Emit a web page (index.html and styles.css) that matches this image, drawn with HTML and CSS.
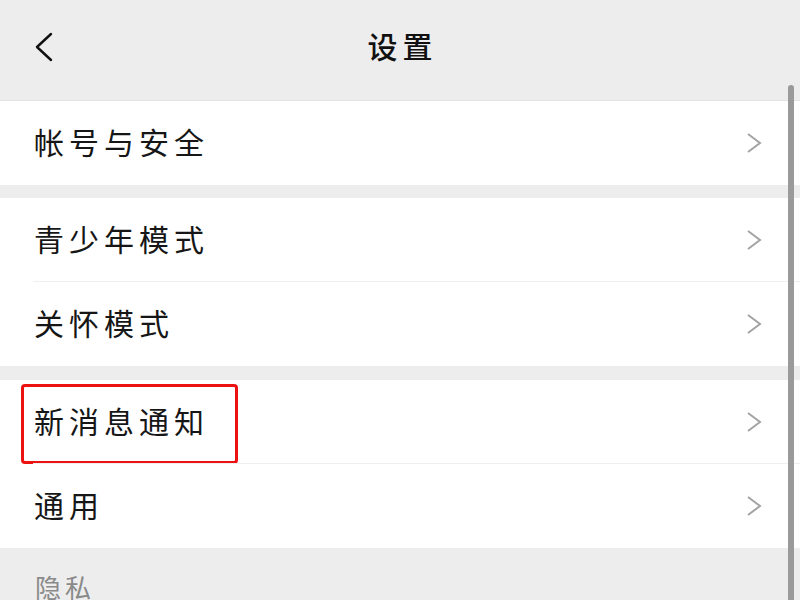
FILE: index.html
```html
<!DOCTYPE html>
<html lang="zh">
<head>
<meta charset="utf-8">
<title>设置</title>
<link rel="stylesheet" href="styles.css">
</head>
<body>
<div class="screen">
  <header class="topbar">
    <svg class="back" width="20" height="30" viewBox="0 0 20 30"><path d="M17 2 L3 15 L17 28" fill="none" stroke="#111" stroke-width="2.4" stroke-linecap="round" stroke-linejoin="round"/></svg>
    <h1 class="title">设置</h1>
  </header>

  <section class="group">
    <div class="row"><span class="label">帐号与安全</span><svg class="chev" width="16" height="22" viewBox="0 0 16 22"><path d="M2 2 L14 11 L2 20" fill="none" stroke="#a3a3a3" stroke-width="2"/></svg></div>
  </section>

  <section class="group gap1">
    <div class="row divided"><span class="label">青少年模式</span><svg class="chev" width="16" height="22" viewBox="0 0 16 22"><path d="M2 2 L14 11 L2 20" fill="none" stroke="#a3a3a3" stroke-width="2"/></svg></div>
    <div class="row"><span class="label">关怀模式</span><svg class="chev" width="16" height="22" viewBox="0 0 16 22"><path d="M2 2 L14 11 L2 20" fill="none" stroke="#a3a3a3" stroke-width="2"/></svg></div>
  </section>

  <section class="group gap2">
    <div class="row divided"><span class="label">新消息通知</span><span class="highlight"></span><svg class="chev" width="16" height="22" viewBox="0 0 16 22"><path d="M2 2 L14 11 L2 20" fill="none" stroke="#a3a3a3" stroke-width="2"/></svg></div>
    <div class="row"><span class="label">通用</span><svg class="chev" width="16" height="22" viewBox="0 0 16 22"><path d="M2 2 L14 11 L2 20" fill="none" stroke="#a3a3a3" stroke-width="2"/></svg></div>
  </section>

  <div class="section-title">隐私</div>

  <div class="scrollbar"></div>
</div>
</body>
</html>
```
FILE: styles.css
```css
* { box-sizing: border-box; }
html, body { margin: 0; padding: 0; }
body {
  background: #ededed;
  font-family: "Noto Sans CJK SC", "Noto Sans", sans-serif;
  color: #161616;
  width: 800px;
  height: 600px;
  overflow: hidden;
}
.screen {
  position: relative;
  width: 800px;
  height: 600px;
  overflow: hidden;
}
.topbar {
  height: 101px;
  display: flex;
  align-items: center;
  justify-content: center;
  position: relative;
  border-bottom: 1px solid #e4e4e4;
}
.back {
  position: absolute;
  left: 34px;
  top: 32px;
}
.title {
  margin: 0 0 10px 0;
  font-size: 30px;
  font-weight: 500;
  letter-spacing: 5px;
  padding-left: 5px;
  color: #111;
}
.group {
  background: #fff;
}
.gap1 { margin-top: 13px; }
.gap2 { margin-top: 14px; }
.row {
  position: relative;
  height: 84px;
  display: flex;
  align-items: center;
  justify-content: space-between;
  padding: 0 38px 0 34px;
}
.row.divided::after {
  content: "";
  position: absolute;
  left: 33px;
  right: 0;
  bottom: 0;
  height: 1px;
  background: #efefef;
}
.label {
  font-size: 30px;
  letter-spacing: 5px;
  line-height: 1;
  margin-top: -5px;
}
.chev { display: block; }
.highlight {
  position: absolute;
  left: 21px;
  top: 4px;
  width: 217px;
  height: 80px;
  border: 3px solid #ee1111;
  border-radius: 4px;
}
.section-title {
  padding: 20px 0 0 35px;
  font-size: 26px;
  letter-spacing: 4px;
  color: #8a8a8a;
}
.scrollbar {
  position: absolute;
  left: 788px;
  top: 85px;
  width: 6px;
  height: 540px;
  border-radius: 3px;
  background: #9a9a9a;
}
```
